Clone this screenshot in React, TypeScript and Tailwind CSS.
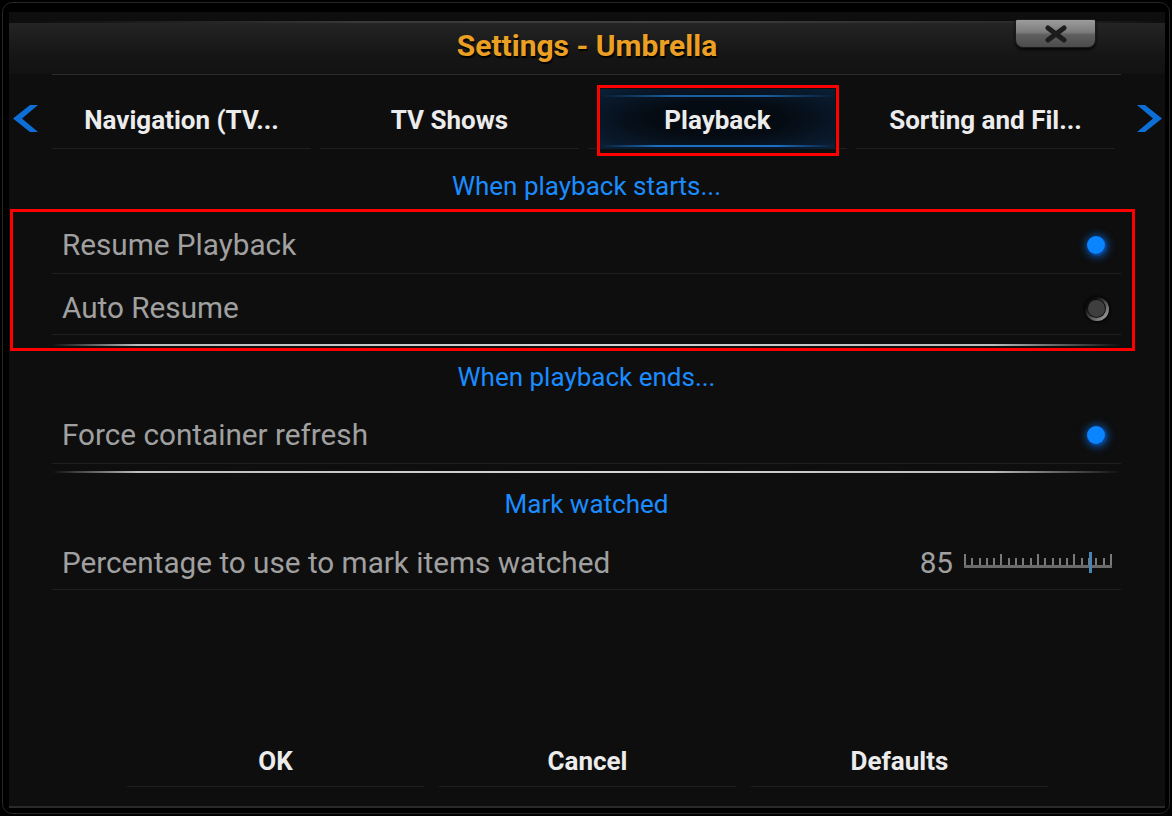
import React from "react";

const Chevron = ({ dir }: { dir: "left" | "right" }) => (
  <svg width="25" height="27" viewBox="0 0 25 27" className="shrink-0">
    {dir === "left" ? (
      <polygon points="17,0 25,0 9,13.5 25,27 17,27 0,13.5" fill="#0d6fd6" />
    ) : (
      <polygon points="8,0 0,0 16,13.5 0,27 8,27 25,13.5" fill="#0d6fd6" />
    )}
  </svg>
);

const RadioOn = () => (
  <div className="relative w-[20px] h-[20px]">
    <div className="absolute inset-0 rounded-full bg-[#08418a] shadow-[0_0_7px_2px_rgba(10,110,230,0.55)]" />
    <div className="absolute left-0 top-0 w-[18px] h-[18px] rounded-full bg-[#0a84ff]" />
  </div>
);

const RadioOff = () => (
  <div className="relative w-[24px] h-[24px] mr-[-2px]">
    <div className="absolute inset-0 rounded-full bg-[linear-gradient(135deg,#0c0c0c_25%,#959595_85%)] shadow-[0_0_3px_1px_rgba(0,0,0,0.9)]" />
    <div className="absolute left-[2px] top-[2px] w-[19px] h-[19px] rounded-full bg-[#121212]" />
    <div className="absolute left-[3px] top-[3px] w-[17px] h-[17px] rounded-full bg-[#3e3e3e]" />
  </div>
);

const SectionHeader = ({ text, className = "" }: { text: string; className?: string }) => (
  <div className={`h-[58px] pt-[4px] flex items-center justify-center text-[26px] text-[#1a8cff] ${className}`}>
    {text}
  </div>
);

const Row = ({ label, h, pt, right }: { label: string; h: string; pt: string; right: React.ReactNode }) => (
  <div className={`${h} ${pt} pl-[10px] pr-[14px] flex items-center justify-between border-b border-[#1f1f1f]`}>
    <span className="text-[29.7px] text-[#a0a0a0]">{label}</span>
    {right}
  </div>
);

const GradLine = ({ className }: { className: string }) => (
  <div className={`h-[2px] bg-[linear-gradient(to_right,transparent_0%,#bdbdbd_8%,#d6d6d6_50%,#bdbdbd_88%,transparent_100%)] ${className}`} />
);

const Slider = () => {
  const ticks = Array.from({ length: 21 }, (_, i) => i);
  return (
    <div className="relative w-[148px] h-[22px]">
      <div className="absolute left-0 right-0 top-[2px] h-[11px] flex items-end justify-between">
        {ticks.map((i) => (
          <div key={i} className={`w-[2px] bg-[#7a7a7a] ${i % 5 === 0 ? "h-[11px]" : "h-[7px]"}`} />
        ))}
      </div>
      <div className="absolute left-0 right-0 top-[13px] h-[3px] bg-[#6a6a6a]" />
      <div className="absolute left-[125px] top-0 w-[3px] h-[21px] bg-[#4a86b4]" />
    </div>
  );
};

const Tab = ({ label, focused }: { label: string; focused?: boolean }) => (
  <div className="w-[259px] h-[63px] pt-[6px] border-b border-[#1f1f1f] flex items-center justify-center relative">
    {focused && (
      <div className="absolute left-[12px] right-[12px] top-[3px] bottom-[-1px] flex flex-col justify-between bg-[radial-gradient(ellipse_at_center,#050b12_40%,#0b2038_100%)]">
        <div className="h-[2px] mt-[6px] bg-[linear-gradient(to_right,transparent,#1a5f9f_30%,#1a5f9f_70%,transparent)]" />
        <div className="h-[2px] mb-[2px] bg-[linear-gradient(to_right,transparent,#1f6fc0_25%,#1f6fc0_75%,transparent)]" />
      </div>
    )}
    <span className="relative text-[26px] font-bold text-[#ececec]">{label}</span>
  </div>
);

const FooterButton = ({ label }: { label: string }) => (
  <div className="w-[297px] h-[56px] pt-[5px] border-b border-[#1f1f1f] flex items-center justify-center text-[26px] font-bold text-[#ececec]">
    {label}
  </div>
);

export default function App() {
  return (
    <div className="relative w-[1172px] h-[816px] bg-black overflow-hidden font-['Roboto',sans-serif] p-[2px]">
      <div className="h-full rounded-[10px] border border-[#262626] pt-[9px] pl-[6px]">
        <div className="relative w-[1156px] h-[796px] bg-[#0e0e0e] border-b-2 border-[#2a2a2a] flex flex-col pt-[8px]">
          {/* header */}
          <div className="relative h-[55px] flex flex-col">
            <div className="h-[3px] mt-[1px] bg-[linear-gradient(to_right,transparent_2%,#383838_30%,#3e3e3e_55%,#2a2a2a_88%,transparent_100%)]" />
            <div className="flex-1 flex items-center justify-center bg-[linear-gradient(to_bottom,#242424,#161616_60%,#121212)] pb-[6px]">
              <span className="text-[30px] font-bold text-[#eba024] [text-shadow:1px_2px_1px_#000]">Settings - Umbrella</span>
            </div>
            <div className="h-[2px] ml-[43px] w-[1069px] bg-[#2b2b2b]" />
          </div>
          {/* close button */}
          <div className="absolute left-[1006px] top-[7px] w-[81px] h-[29px] rounded-b-[8px] rounded-t-[2px] border border-[#1a1a1a] bg-[linear-gradient(to_bottom,#9c9c9c_0%,#7c7c7c_45%,#5e5e5e_55%,#4c4c4c_100%)] shadow-[0_2px_3px_rgba(0,0,0,0.8)] flex items-center justify-center">
            <svg width="24" height="18" viewBox="0 0 24 18">
              <path d="M4 3 L20 15 M20 3 L4 15" stroke="#1c1c1c" strokeWidth="5" strokeLinecap="round" />
            </svg>
          </div>
          {/* tabs */}
          <div className="mt-[11px] h-[64px] pl-[4px] flex items-center">
            <Chevron dir="left" />
            <div className="ml-[14px] flex gap-[9px] self-stretch">
              <Tab label="Navigation (TV..." />
              <Tab label="TV Shows" />
              <Tab label="Playback" focused />
              <Tab label="Sorting and Fil..." />
            </div>
            <div className="ml-[22px]">
              <Chevron dir="right" />
            </div>
          </div>
          {/* list */}
          <div className="ml-[43px] w-[1069px] flex flex-col">
            <SectionHeader text="When playback starts..." className="mt-[5px]" />
            <Row label="Resume Playback" h="h-[61px]" pt="pt-[5px]" right={<RadioOn />} />
            <Row label="Auto Resume" h="h-[61px]" pt="pt-[9px]" right={<RadioOff />} />
            <GradLine className="mt-[9px]" />
            <SectionHeader text="When playback ends..." />
            <Row label="Force container refresh" h="h-[60px]" pt="pt-[4px]" right={<RadioOn />} />
            <GradLine className="mt-[7px]" />
            <SectionHeader text="Mark watched" />
            <Row
              label="Percentage to use to mark items watched"
              h="h-[59px]"
              pt="pt-[7px]"
              right={
                <div className="flex items-center gap-[11px] mr-[-5px]">
                  <span className="text-[29.7px] text-[#a0a0a0]">85</span>
                  <Slider />
                </div>
              }
            />
          </div>
          {/* footer */}
          <div className="mt-auto pb-[19px] ml-[118px] flex gap-[15px]">
            <FooterButton label="OK" />
            <FooterButton label="Cancel" />
            <FooterButton label="Defaults" />
          </div>
        </div>
      </div>
      {/* annotation boxes */}
      <div className="absolute left-[597px] top-[85px] w-[242px] h-[71px] border-[3px] border-[#ff0000]" />
      <div className="absolute left-[10px] top-[209px] w-[1125px] h-[142px] border-[3px] border-[#ff0000]" />
    </div>
  );
}
